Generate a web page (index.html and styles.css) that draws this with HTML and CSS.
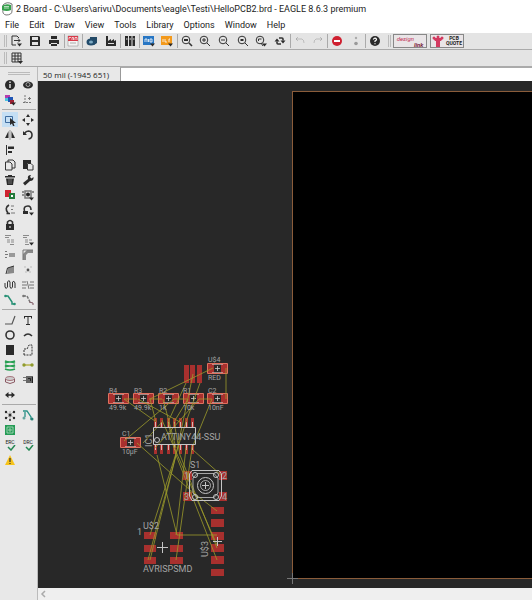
FILE: index.html
```html
<!DOCTYPE html>
<html lang="en">
<head>
<meta charset="utf-8">
<title>2 Board - EAGLE</title>
<link rel="stylesheet" href="styles.css">
</head>
<body>
<div class="app">
<header class="titlebar">
<svg class="logo" viewBox="0 0 12 14"><path d="M2 3Q6-1 11 2V9Q11 13 5 13Q1 12 2 8Z" fill="#fff" stroke="#555" stroke-width=".8"/><path d="M1 4Q5 1 10 3V8Q6 10 1 8Z" fill="#35a04c"/><path d="M3 6H8M3 4.500H8" stroke="#d9efdc" stroke-width=".8"/></svg>
<h1>2 Board - C:\Users\arivu\Documents\eagle\Testi\HelloPCB2.brd - EAGLE 8.6.3 premium</h1>
</header>
<nav class="menu">
<button>File</button><button>Edit</button><button>Draw</button><button>View</button><button>Tools</button><button>Library</button><button>Options</button><button>Window</button><button>Help</button>
</nav>
<div class="toolbar">
<span class="grip"></span>
<div class="tools">
<button aria-label="Open"><svg viewBox="0 0 12 12"><path d="M7 1H2V10H6M7 1L9 3" class="l"/><path d="M4 5.500H10M8 3.500L10 5.500L8 7.500" class="l"/><path d="M7 8.500H12L9.500 11.500Z"/></svg></button>
<button aria-label="Save"><svg viewBox="0 0 12 12"><path d="M1 1H10L11 2V11H1Z"/><path d="M3 2H9V5H3ZM3 7H9V10H3Z" fill="#e4e4e4"/></svg></button>
<button aria-label="Print"><svg viewBox="0 0 12 12"><path d="M3 1H9V4H3ZM1 5H11V9H9V8H3V9H1ZM3 9H9V11H3Z"/></svg></button>
<button class="sep" aria-label="CAM"><svg viewBox="0 0 12 12"><path d="M1 1H11V11H1Z" fill="#f4f4f4" stroke="#999" stroke-width=".6"/><path d="M1 1H11V6H1Z" fill="#d73a49"/><path d="M2 4.500V2.500H4M5 5V2.500H6.500V5M8 5V2.500H10V5" stroke="#fff" fill="none" stroke-width=".7"/><path d="M3 8H9" stroke="#aaa"/></svg></button>
<button class="sep" aria-label="3D view"><svg viewBox="0 0 12 12"><path d="M4 2H11V8L8 10H4Z" fill="#244a66"/><ellipse cx="5" cy="7" rx="4.500" ry="3.500" fill="#214b6b"/><ellipse cx="5" cy="7" rx="2" ry="1.500" fill="#7eabc4"/></svg></button>
<button aria-label="Manufacturing"><svg viewBox="0 0 12 12"><path d="M1 1H3V6L6 4V6L9 4V6L11 5V11H1Z"/><path d="M3 8.500H9" stroke="#ddd"/></svg></button>
<button class="sep" aria-label="Library manager"><svg viewBox="0 0 12 12"><path d="M1 1H4V11H1ZM5 1H7.500V11H5ZM8.500 1H11V11H8.500Z"/><path d="M2 4H3.500M5.500 4H7M9 4H10.500" stroke="#ddd"/></svg></button>
<button class="sep" aria-label="Script"><svg viewBox="0 0 12 12"><path d="M0 1H11V10H0Z" fill="#2776c4"/><path d="M2 7V4H4V7M5.500 4V7M7 4H9V7H7Z" stroke="#fff" fill="none" stroke-width=".8"/><path d="M7 8.500H12L9.500 11.500Z"/></svg></button>
<button aria-label="User language program"><svg viewBox="0 0 12 12"><path d="M0 1H11V10H0Z" fill="#f39a1d"/><path d="M2 4V7M4 4V7H6M8 7V4H9" stroke="#fff" fill="none" stroke-width=".8"/><path d="M7 8.500H12L9.500 11.500Z"/></svg></button>
<button class="sep" aria-label="Zoom fit"><svg viewBox="0 0 12 12"><circle cx="5" cy="5" r="3.800" class="l"/><path d="M3 4H7V6H3Z"/><path d="M8 8L11 11" class="l b"/></svg></button>
<button aria-label="Zoom in"><svg viewBox="0 0 12 12"><circle cx="5" cy="5" r="3.800" class="l"/><path d="M3 5H7M5 3V7M8 8L11 11" class="l"/></svg></button>
<button aria-label="Zoom out"><svg viewBox="0 0 12 12"><circle cx="5" cy="5" r="3.800" class="l"/><path d="M3 5H7M8 8L11 11" class="l"/></svg></button>
<button aria-label="Zoom redraw"><svg viewBox="0 0 12 12"><circle cx="5" cy="5" r="3.800" class="l"/><path d="M3.500 4H6.500V6H3.500Z"/><path d="M8 8L11 11" class="l"/></svg></button>
<button aria-label="Zoom select"><svg viewBox="0 0 12 12"><circle cx="5" cy="5" r="3.800" class="l"/><path d="M3.500 6V4H6.500M6 8L8 11" class="l"/><path d="M7 8.500H12L9.500 11.500Z"/></svg></button>
<button aria-label="Refresh"><svg viewBox="0 0 12 12"><path d="M3 6.500V8Q3 9 4 9H7M9 5.500V4Q9 3 8 3H5" class="l b"/><path d="M.5 6.500L3 3.500L5.500 6.500ZM6.500 5.500L9 8.500L11.500 5.500Z"/></svg></button>
<button class="sep" aria-label="Undo"><svg viewBox="0 0 12 12"><path d="M2 4H8Q10 5 10 8M4 2L2 4L4 6" class="l" opacity=".22"/></svg></button>
<button aria-label="Redo"><svg viewBox="0 0 12 12"><path d="M10 4H4Q2 5 2 8M8 2L10 4L8 6" class="l" opacity=".22"/></svg></button>
<button class="sep" aria-label="Stop"><svg viewBox="0 0 12 12"><circle cx="6" cy="6" r="5" fill="#cf2030"/><path d="M3 6H9" stroke="#fff" stroke-width="2"/></svg></button>
<button aria-label="Go"><svg viewBox="0 0 12 12"><circle cx="6" cy="3" r="1.200" fill="#aaa"/><circle cx="6" cy="8.500" r="1.800" fill="#999"/></svg></button>
<button class="sep" aria-label="Help"><svg viewBox="0 0 12 12"><circle cx="6" cy="6" r="5"/><path d="M4.200 4.500Q6 2 7.500 4.200Q7.500 5.500 6 6V7M6 8.200V9.300" stroke="#fff" fill="none" stroke-width="1.200"/></svg></button>
</div>
<span class="grip"></span>
<button class="brand link"><span>design</span><b>link</b></button>
<button class="brand quote"><svg viewBox="0 0 12 12"><path d="M1 3H11L9 6H3ZM4 5H8V12H4Z" fill="#d33a60"/><circle cx="2" cy="3" r="1.500" fill="#d33a60"/><circle cx="6" cy="2" r="1.500" fill="#d33a60"/><circle cx="10" cy="3" r="1.500" fill="#d33a60"/></svg><span>PCB<br>QUOTE</span></button>
</div>
<div class="toolbar">
<span class="grip"></span>
<div class="grid-tool"><button aria-label="Grid"><svg viewBox="0 0 12 12"><path d="M1 1H10V10H1ZM4 1V10M7 1V10M1 4H10M1 7H10" class="l"/><path d="M7 9H12L9.500 12Z"/></svg></button></div>
</div>
<div class="work">
<aside class="side">
<span class="grip wide"></span>
<div class="palette">
<button aria-label="Info"><svg viewBox="0 0 12 12"><circle cx="6" cy="6" r="5"/><path d="M6 5V9M6 2.500V4" stroke="#fff" stroke-width="1.300"/></svg></button>
<button aria-label="Show"><svg viewBox="0 0 12 12"><ellipse cx="6" cy="6" rx="5" ry="3.500"/><circle cx="6" cy="5.500" r="2" fill="none" stroke="#bbb" stroke-width=".8"/></svg></button>
<button aria-label="Display"><svg viewBox="0 0 12 12"><path d="M1 1H6V6H1Z" fill="#b43cae"/><path d="M4 3H9V8H4Z" fill="#1f55b5"/><path d="M1 4H4V7H1Z" fill="#4bc4df"/><path d="M6 6H10V10H6Z" fill="#a02132"/><path d="M7 8.500H12L9.500 11.500Z"/></svg></button>
<button aria-label="Mark"><svg viewBox="0 0 12 12"><path d="M3 1V10M1 8.500H10" fill="none" stroke="#777" stroke-dasharray="2 1"/><path d="M6 4.500H9M7.500 3V6" stroke="#777"/></svg></button>
</div>
<div class="palette">
<button class="on" aria-label="Group"><svg viewBox="0 0 12 12"><path d="M1.500 2.500H8.500V8.500H1.500Z" fill="none" stroke="#3e6ca0"/><path d="M6 4L12 9L9.500 9L10.500 12L9 12L8 9.500L6 11Z"/></svg></button>
<button aria-label="Move"><svg viewBox="0 0 12 12"><path d="M6 0L8 3H4ZM6 12L4 9H8ZM0 6L3 4V8ZM12 6L9 8V4Z"/></svg></button>
<button aria-label="Mirror"><svg viewBox="0 0 12 12"><path d="M4.500 2V9H1ZM7.500 2V9H11Z"/><path d="M6 1V11" stroke="#777" stroke-width=".7"/></svg></button>
<button aria-label="Rotate"><svg viewBox="0 0 12 12"><path d="M2.500 4.500Q4 2 6.500 2Q10 2.500 10 6Q10 9.500 6.500 10" class="l b"/><path d="M1 2V6H5Z"/></svg></button>
<button aria-label="Align"><svg viewBox="0 0 12 12"><path d="M2.500 1V11" class="l"/><path d="M4 2.500H10V5H4ZM4 7H8V9H4Z"/></svg></button><span></span>
<button aria-label="Copy"><svg viewBox="0 0 12 12"><path d="M4 3V1H9L11 3V9H8M1.500 3H6L8 5V11H1.500Z" class="l"/></svg></button>
<button aria-label="Paste"><svg viewBox="0 0 12 12"><path d="M1 1H9V4H5V10H1Z"/><path d="M5.500 4.500H9L11 6.500V11H5.500Z" class="l"/></svg></button>
<button aria-label="Delete"><svg viewBox="0 0 12 12"><path d="M1 2H4V1H8V2H11V3.500H1ZM2 4.500H10L9 11H3Z"/><path d="M5 5V10M7 5V10" stroke="#999" stroke-width=".6"/></svg></button>
<button aria-label="Change"><svg viewBox="0 0 12 12"><path d="M1 9L6 5Q5 1 9 1L8 3L9.500 4.500L11.500 3Q12 7 8 7L3 11.500Z"/></svg></button>
<button aria-label="Add part"><svg viewBox="0 0 12 12"><path d="M1 1H7V8H1Z" fill="#ce2330"/><path d="M5 4H11V10H5Z" fill="#247a3a"/><path d="M7 6H9V8H7Z" fill="#fff"/></svg></button>
<button aria-label="Replace"><svg viewBox="0 0 12 12"><path d="M3 2H9V9H3Z" fill="none" stroke="#777" stroke-width="1.500"/><path d="M0 3H2M0 6H2M10 3H12" class="l"/><circle cx="6" cy="5.500" r="2" fill="#222"/><path d="M7 8.500H12L9.500 11.500Z"/></svg></button>
<button aria-label="Swap"><svg viewBox="0 0 12 12"><path d="M5 1Q0 4 4 9M2.500 9.500H6" class="l b"/><path d="M7 2H10M7 9H11M7 5.500H9" stroke="#777"/></svg></button>
<button aria-label="Gate swap"><svg viewBox="0 0 12 12"><path d="M2.500 7Q1 2 6 2Q9 2 9 6" class="l b"/><path d="M1 7H6V10H1ZM7 8.500H12L9.500 11.500Z"/></svg></button>
<button aria-label="Lock"><svg viewBox="0 0 12 12"><path d="M2 5H10V11H2Z"/><path d="M3.500 5V3Q6 0 8.500 3V5" class="l b"/><path d="M6 7V9" stroke="#fff"/></svg></button><span></span>
<button aria-label="Name"><svg viewBox="0 0 12 12"><path d="M1 1.500H7M1 3.500H5M3 6H6M7 6H10M3 8H6M7 8H10M6 10.500H10" stroke="#8a8a8a"/></svg></button>
<button aria-label="Value"><svg viewBox="0 0 12 12"><path d="M1 1.500H7M1 3.500H5M3 6H6M7 6H10M3 8H6M3 10.500H7" stroke="#8a8a8a"/><path d="M7 8.500H12L9.500 11.500Z"/></svg></button>
<button aria-label="Smash"><svg viewBox="0 0 12 12"><path d="M1 2.500H3M1 5.500H4M1 8.500H3" stroke="#777"/><path d="M5 4H11V8H5Z" fill="#999"/></svg></button>
<button aria-label="Miter"><svg viewBox="0 0 12 12"><path d="M1 11V5L5 1H11V4H6L4 6V11Z" fill="#888"/><path d="M1 11V1H11" stroke="#777" fill="none"/></svg></button>
<button aria-label="Split"><svg viewBox="0 0 12 12"><path d="M3 10L4 4L10 2V9Z" fill="#888"/><path d="M2 10L3.500 4L10 2" class="l"/></svg></button>
<button aria-label="Optimize"><svg viewBox="0 0 12 12"><path d="M2 3H4M8 3H10M3 8H5M7 8H9" stroke="#bbb"/><circle cx="6" cy="6" r="1.400" fill="#555"/></svg></button>
<button aria-label="Meander"><svg viewBox="0 0 12 12"><path d="M1 4V8Q2 11 3.500 8V3Q5 0 6 3V8Q7 11 8.500 8V3Q10 1 11 4V9" class="l"/></svg></button>
<button aria-label="Slice"><svg viewBox="0 0 12 12"><path d="M0 3H4M8 3H12M0 6H5M7 6H12M0 9H4M8 9H12M5 2L7 10" stroke="#666" stroke-width=".9"/></svg></button>
<button aria-label="Route"><svg viewBox="0 0 12 12"><path d="M1 2H4L8 8V10H11" fill="none" stroke="#279075" stroke-width="1.500"/><circle cx="1.500" cy="2" r="1.300" fill="#279075"/><circle cx="10.500" cy="10" r="1.300" fill="#279075"/></svg></button>
<button aria-label="Ripup"><svg viewBox="0 0 12 12"><path d="M1 2H5L8 8" fill="none" stroke="#777" stroke-dasharray="3 1" stroke-width="1.500"/><circle cx="1.500" cy="2" r="1.300" fill="#777"/><path d="M7 8L11 9V11" stroke="#7b5560" fill="none"/></svg></button>
</div>
<div class="palette">
<button aria-label="Line"><svg viewBox="0 0 12 12"><path d="M1 10H8L11 2" fill="none" stroke="#555" stroke-width="1.200"/></svg></button>
<button aria-label="Text"><svg viewBox="0 0 12 12"><path d="M2 2H10V4.500H9V3H6.500V10H8V11H4V10H5.500V3H3V4.500H2Z"/></svg></button>
<button aria-label="Circle"><svg viewBox="0 0 12 12"><circle cx="6" cy="6" r="4" class="l b"/></svg></button>
<button aria-label="Arc"><svg viewBox="0 0 12 12"><path d="M2 7Q6 3 10 7" class="l b"/></svg></button>
<button aria-label="Rectangle"><svg viewBox="0 0 12 12"><path d="M2 1H10V11H2Z"/></svg></button>
<button aria-label="Polygon"><svg viewBox="0 0 12 12"><path d="M2 11V5H5L7 1H10V11Z" class="l" stroke-dasharray="2 1"/></svg></button>
<button aria-label="Via"><svg viewBox="0 0 12 12"><path d="M1 2Q6 4 11 2M1 6Q6 8 11 6M1 10Q6 12 11 10M1 4Q6 2 11 4M1 8Q6 6 11 8" fill="none" stroke="#27a052" stroke-width="1.600"/></svg></button>
<button aria-label="Signal"><svg viewBox="0 0 12 12"><path d="M1 6H11" stroke="#b8b44c" stroke-width="1.500"/><circle cx="2" cy="6" r="1.700" fill="#8f9b2e"/><circle cx="10" cy="6" r="1.700" fill="#8f9b2e"/></svg></button>
<button aria-label="Hole"><svg viewBox="0 0 12 12"><ellipse cx="6" cy="4.500" rx="4.500" ry="2" fill="#ccc" stroke="#a5747c"/><path d="M1.500 5V8Q6 11 10.500 8V5" fill="none" stroke="#8a5963"/></svg></button>
<button aria-label="Attribute"><svg viewBox="0 0 12 12"><path d="M1 3.500H4M1 6.500H4" stroke="#777"/><path d="M4 2H11V9H4Z" fill="#666"/><path d="M6 4.500H8.500V7M10.500 3V9" stroke="#222" fill="none"/></svg></button>
<button aria-label="Dimension"><svg viewBox="0 0 12 12"><path d="M2 6H10" class="l b"/><path d="M1 6L4.500 3V9ZM11 6L7.500 3V9Z"/></svg></button><span></span>
</div>
<div class="palette">
<button aria-label="Ratsnest"><svg viewBox="0 0 12 12"><path d="M2 3L10 9M10 2L2 10M6 2V10" stroke="#888" stroke-width=".6"/><circle cx="2" cy="3" r="1.200"/><circle cx="10" cy="3" r="1.200"/><circle cx="6" cy="6" r="1.500"/><circle cx="2" cy="9" r="1.200"/><circle cx="10" cy="9" r="1.200"/><circle cx="6" cy="11" r="1"/></svg></button>
<button aria-label="Autorouter"><svg viewBox="0 0 12 12"><path d="M1 2H5L9 8V10H11M3 3V8" fill="none" stroke="#279085" stroke-width="1.300"/><circle cx="2" cy="9" r="1.500" fill="#65a6a0"/><circle cx="10" cy="10" r="1.500" fill="#278075"/></svg></button>
<button aria-label="Board"><svg viewBox="0 0 12 12"><path d="M1 1H11V11H1Z" fill="#249b55"/><path d="M3 3H9V9H3ZM5 5H7V7H5Z" fill="none" stroke="#a5d6b5" stroke-width=".9"/></svg></button><span></span>
<button class="check" aria-label="ERC"><span>ERC</span><svg viewBox="0 0 12 6"><path d="M4 2L7 5L11 0" fill="none" stroke="#258854" stroke-width="1.500"/></svg></button>
<button class="check" aria-label="DRC"><span>DRC</span><svg viewBox="0 0 12 6"><path d="M4 2L7 5L11 0" fill="none" stroke="#258854" stroke-width="1.500"/></svg></button>
<button aria-label="Errors"><svg viewBox="0 0 12 12"><path d="M6 1L11 11H1Z" fill="#f6c31b"/><path d="M6 4V8M6 9V10" stroke="#333" stroke-width="1.200"/></svg></button>
</div>
</aside>
<main class="editor">
<div class="command"><output>50 mil (-1945 651)</output><input type="text" aria-label="Command"></div>
<svg class="board" role="img" aria-label="Board layout">
<defs>
<g id="chip"><path d="M1 1H7V10H1ZM14 1H20V10H14Z" fill="#a8302e"/><path d="M.5.500H20.500V10.500H.5Z" fill="none" stroke="#e0705f"/><path d="M5 1.500H16M5 9.500H16" stroke="#cdb3ae" stroke-width=".7"/><path d="M8 5.500H13M10.500 3V8" stroke="#ccc" stroke-width=".8"/></g>
<g id="pin"><path d="M0 0H3V9H0Z" fill="#a8302e"/><path d="M1.500 4V9" stroke="#d8b5b0"/></g>
<g id="foot"><path d="M0 0H3V9H0Z" fill="#a8302e"/><path d="M1.500 0V5" stroke="#d8b5b0"/></g>
</defs>
<g transform="translate(-38 -81)">
<rect x="292.500" y="91.500" width="2000" height="487" fill="#000" stroke="#8a5c3a"/>
<path d="M287 578.500H298M292.500 573V584" stroke="#777"/>
<g fill="#a8302e">
<path d="M184 365H189V383H184ZM190 365H195V383H190ZM197 365H202V383H197Z"/>
<path d="M144 532H156V539H144ZM144 545H156V552H144ZM144 557H156V564H144ZM170 532H183V539H170ZM170 545H183V552H170ZM170 557H183V564H170Z"/>
<path d="M211 507H224V514H211ZM211 519H224V527H211ZM211 532H224V540H211ZM211 544H224V552H211ZM211 556H224V564H211ZM211 569H224V576H211Z"/>
<path d="M183 471H192V480H183ZM219 471H227V480H219ZM183 492H192V501H183ZM219 492H227V501H219Z"/>
</g>
<use href="#pin" x="154" y="418"/><use href="#pin" x="160" y="418"/><use href="#pin" x="167" y="418"/><use href="#pin" x="173" y="418"/><use href="#pin" x="179" y="418"/><use href="#pin" x="185" y="418"/><use href="#pin" x="191" y="418"/>
<use href="#foot" x="154" y="445"/><use href="#foot" x="160" y="445"/><use href="#foot" x="167" y="445"/><use href="#foot" x="173" y="445"/><use href="#foot" x="179" y="445"/><use href="#foot" x="185" y="445"/><use href="#foot" x="191" y="445"/>
<use href="#chip" x="108" y="393"/><use href="#chip" x="133" y="393"/><use href="#chip" x="158" y="393"/><use href="#chip" x="183" y="393"/><use href="#chip" x="207" y="393"/><use href="#chip" x="207" y="363"/><use href="#chip" x="120" y="437"/>
<g fill="none" stroke="#9c9a2b" stroke-width=".8">
<path d="M124 399H137M149 399H162M174 399H187M199 399H212M226 368V399M213 368L170 389L150 399M193 374L176 455L150 560M186 383L168 422L176 455L217 560M124 399L155 421M150 399L156 422M138 399L180 422M174 399L124 441M199 399L155 448M212 399L192 448L176 560M188 399L174 422L180 455L217 548M200 383L186 422L150 535M163 399L176 448M137 443L190 490L217 511M143 443L162 422M157 455L177 535H217M193 450L221 475M176 455L148 560M186 448L176 535M162 420L217 545"/>
</g>
<g fill="none" stroke="#c5c5c5">
<path d="M153.500 427.500H195.500V444.500H153.500Z"/><circle cx="157" cy="440" r="2.500"/>
<path d="M192 470.500H219L221.500 474V496L219 500.500H192L189.500 496V474Z"/><path d="M197 473.500H214L218 478V493L214 497.500H197L193 493V478Z" stroke-width=".8"/>
<circle cx="205.500" cy="485.500" r="8"/><circle cx="205.500" cy="485.500" r="5" stroke-width=".8"/>
<circle cx="195" cy="475" r="2.500"/><circle cx="216" cy="475" r="2.500"/><circle cx="195" cy="497" r="2.500"/><circle cx="216" cy="497" r="2.500"/>
<path d="M202 485.500H209M205.500 482V489M157 547.500H168M162.500 542V553M213 541.500H222M217.500 537V546"/>
</g>
<g class="ref">
<text x="109" y="393">R4</text><text x="134" y="393">R3</text><text x="159" y="393">R2</text><text x="183" y="393">R1</text><text x="208" y="393">C2</text><text x="208" y="362">U$4</text><text x="122" y="436">C1</text>
<text x="109" y="410">49.9k</text><text x="134" y="410">49.9k</text><text x="159" y="410">1k</text><text x="183" y="410">10k</text><text x="208" y="410">10nF</text><text x="208" y="380">RED</text><text x="122" y="454">10µF</text>
</g>
<g class="ref big">
<text x="161" y="440">ATTINY44-SSU</text><text x="190" y="468">S1</text><text x="143" y="529">U$2</text><text x="137" y="535">1</text><text x="143" y="572">AVRISPSMD</text>
<text transform="translate(152 447) rotate(-90)">IC1</text><text transform="translate(208 557) rotate(-90)">U$3</text>
<text x="184" y="479">1</text><text x="222" y="479">2</text><text x="184" y="500">3</text><text x="222" y="500">4</text>
</g>
</g>
</svg>
<div class="scroll"><button aria-label="Scroll left"><svg viewBox="0 0 12 12"><path d="M7 3L4 6L7 9" fill="none" stroke="#aaa" stroke-width="1.500"/></svg></button></div>
</main>
</div>
</div>
</body>
</html>
```

FILE: styles.css
```css
* { box-sizing: border-box; }
body { margin: 0; background: #fff; color: #222; font-family: Roboto, "Open Sans", sans-serif; }
button { border: 0; padding: 0; margin: 0; background: none; color: inherit; font: inherit; }
svg { display: block; }
button svg { width: 12px; height: 12px; fill: #2b2b2b; }
.l { fill: none; stroke: #333; stroke-width: 1; }
.b { stroke-width: 1.6; }
.app { display: flex; flex-direction: column; min-height: 100vh; }
.titlebar { display: flex; align-items: center; gap: 3px; height: 18px; padding-left: 1px; }
.logo { width: 12px; height: 14px; }
h1 { margin: 0; font-size: 9px; font-weight: 400; line-height: 16px; white-space: nowrap; }
.menu { display: flex; gap: 10px; height: 15px; padding-left: 5px; font-size: 9px; line-height: 15px; }
.toolbar { display: flex; align-items: center; height: 17px; background: #e4e4e4; border-bottom: 1px solid #aaa; }
.grip { width: 3px; height: 12px; margin-left: 4px; border: solid #bbb; border-width: 0 1px; }
.tools { display: grid; grid-template-columns: repeat(20, 1fr); width: 377px; }
.tools button, .grid-tool button { display: flex; justify-content: center; align-items: center; height: 14px; }
.tools .sep { border-left: 1px solid #aaa; }
.grid-tool { padding-left: 4px; }
.brand { display: flex; align-items: center; justify-content: center; width: 34px; height: 14px; margin-left: 2px; border: 1px solid #888; background: #e9e5e7; line-height: 5px; }
.brand + .brand { margin-left: 3px; }
.link { font-size: 6px; font-style: italic; color: #c02a50; }
.link span { align-self: flex-start; line-height: 7px; }
.link b { color: #7b2540; align-self: flex-end; }
.quote { gap: 2px; font-size: 5px; font-weight: 700; }
.work { display: flex; flex: 1; }
.side { display: flex; flex-direction: column; width: 38px; background: #e8e8e8; border-right: 1px solid #bbb; }
.wide { width: 22px; height: 3px; margin: 5px 0 2px 8px; border-width: 1px 0; }
.palette { display: grid; grid-template-columns: 16px 18px; column-gap: 1px; grid-auto-rows: 15px; margin: 0 1px 0 2px; padding-bottom: 2px; }
.palette + .palette { border-top: 1px solid #aaa; padding-top: 2px; }
.palette button { display: flex; align-items: center; justify-content: center; }
.palette .on { background: #c5dff4; }
.palette .check { flex-direction: column; font-size: 5px; line-height: 6px; }
.check svg { height: 6px; }
.editor { display: flex; flex-direction: column; flex: 1; min-width: 0; }
.command { display: flex; height: 14px; background: #e8e8e8; }
.command output { width: 82px; padding-left: 5px; font-family: "Open Sans", sans-serif; font-size: 8px; line-height: 15px; white-space: nowrap; }
.command input { flex: 1; min-width: 0; border: 0; border-left: 1px solid #999; border-top: 1px solid #aaa; background: #fff; padding: 0; }
.board { flex: 1; width: 100%; min-height: 507px; background: #282828; }
.ref { fill: #a5a5a5; font: 7px Roboto, sans-serif; }
.big { font-size: 9px; }
.scroll { height: 12px; background: #efefef; }
.scroll button { display: block; }
```
